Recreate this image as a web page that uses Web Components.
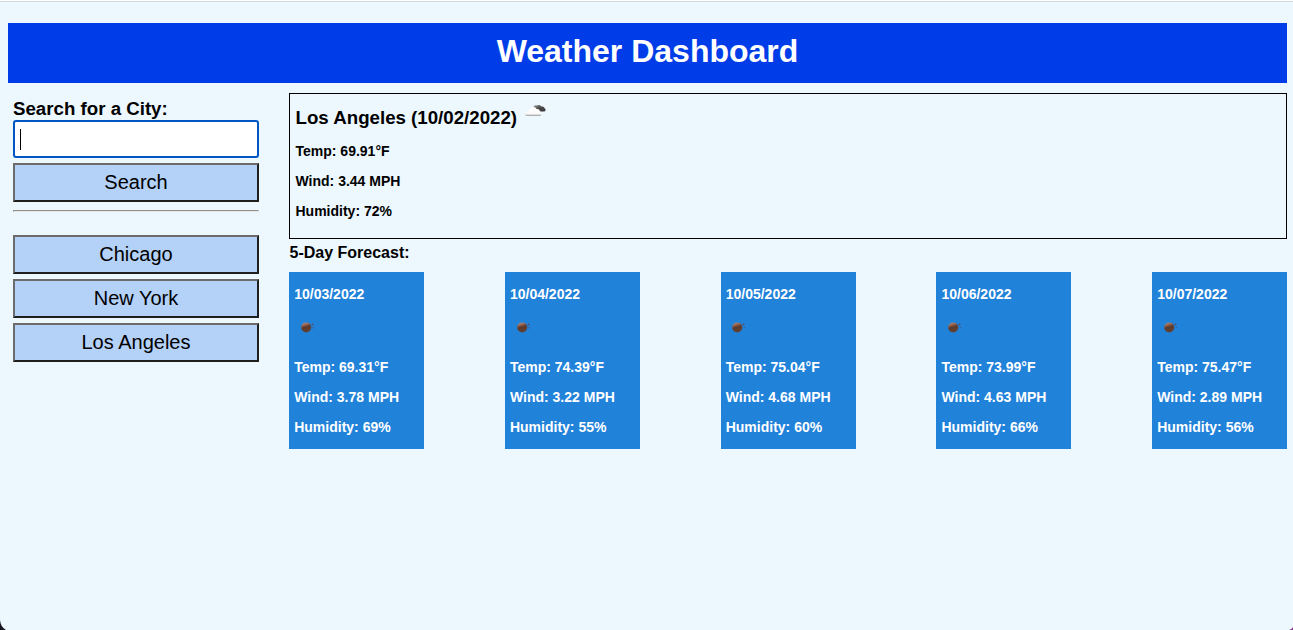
<!DOCTYPE html>
<html lang="en">
<head>
<meta charset="utf-8">
<title>Weather Dashboard</title>
<style>
html,body{margin:0;height:100%;overflow:hidden}
body{background:#ecf7fe;color:#000;font-family:"Liberation Sans",Arial,sans-serif}
</style>
</head>
<body>
<weather-app></weather-app>
<script>
const define = (name, html, setup) => {
  const template = document.createElement('template');
  template.innerHTML = html;
  customElements.define(name, class extends HTMLElement {
    constructor() {
      super();
      this.attachShadow({mode: 'open'}).append(template.content.cloneNode(true));
    }
    connectedCallback() { if (setup) setup(this, this.shadowRoot); }
  });
};

define('page-header', `
<style>
:host{display:block;height:60px;background:#003ce7;color:#fff;text-align:center}
h1{margin:0;font-size:32px;line-height:56px;font-weight:bold}
</style><h1><slot></slot></h1>`);

define('city-button', `
<style>
:host{display:block;height:39px}
button{display:block;box-sizing:border-box;width:100%;height:39px;margin:0;padding:0 0 1px;border:2px solid;border-color:#6b6b6b #1e1e1e #1e1e1e #6b6b6b;background:#b4d1f8;color:#000;font:20px "Liberation Sans",Arial,sans-serif}
</style><button type="button"><slot></slot></button>`);

define('search-field', `
<style>
:host{display:block}
h3{margin:0;font-size:18.7px;line-height:22px;height:22px}
.box{box-sizing:border-box;height:38px;display:flex;align-items:center;padding-left:5px;border:2px solid #0055c4;border-radius:3px;background:#fff}
i{width:1px;height:21px;background:#000}
</style><h3><slot></slot></h3><div class="box" role="textbox"><i></i></div>`);

define('weather-icon', `
<style>
:host{display:block}
svg{display:block}
.sun{display:none}
:host([kind="clear"]) .sun{display:block}
:host([kind="clear"]) .cloud{display:none}
</style>
<svg class="cloud" width="24" height="16" viewBox="0 0 24 16">
<defs>
<linearGradient id="c" x1="0" y1="0" x2="0" y2="1"><stop offset="0" stop-color="#fff"/><stop offset=".76" stop-color="#fafafa"/><stop offset="1" stop-color="#999"/></linearGradient>
<linearGradient id="d" x1="0" y1="0" x2="1" y2="1"><stop offset="0" stop-color="#aaa"/><stop offset=".45" stop-color="#4c4a4a"/><stop offset="1" stop-color="#393737"/></linearGradient>
</defs>
<path fill="url(#d)" d="M9.5 5.2C9 3 11 1.6 12.8 2.4 14.7 1.5 16.7 2 17.4 3.5 19 3.4 20.3 4 20.5 5.2c1.5.4 1.5 2.8-.2 3.3h-5L9.5 5.2z"/>
<path fill="url(#c)" d="M2.9 13c-2.4 0-2.5-3.2.2-3.4C3.2 7.5 4.4 6.8 5.6 7 6 3.8 10.8 2.9 12.6 6.1c2.2-.2 3.3.9 3.3 2.5 2.4.3 2.3 4.3 0 4.4z"/>
</svg>
<svg class="sun" width="16" height="14" viewBox="0 0 16 14">
<defs><linearGradient id="s" x1=".2" y1="0" x2=".5" y2="1"><stop offset="0" stop-color="#b09488"/><stop offset=".3" stop-color="#8f5f4c"/><stop offset=".5" stop-color="#5d392b"/><stop offset="1" stop-color="#654334"/></linearGradient></defs>
<circle cx="6.2" cy="7.4" r="5" fill="url(#s)"/>
<circle cx="12.5" cy="4.4" r=".9" fill="#564e62"/><circle cx="13.4" cy="7.7" r=".7" fill="#4d5270"/>
</svg>`);

define('weather-readings', `
<style>
:host{display:block;font-size:14px;font-weight:bold}
p{margin:0;line-height:30px;height:30px;white-space:nowrap}
</style><p>Temp: <span id="t"></span>°F</p><p>Wind: <span id="w"></span> MPH</p><p>Humidity: <span id="h"></span>%</p>`,
(el, root) => {
  root.getElementById('t').textContent = el.getAttribute('temp');
  root.getElementById('w').textContent = el.getAttribute('wind');
  root.getElementById('h').textContent = el.getAttribute('humidity');
});

define('current-weather', `
<style>
:host{display:block;box-sizing:border-box;height:146px;border:1px solid #000;padding:8px 0 0 5.5px}
.top{display:flex;height:34px}
h3{margin:0;font-size:18.72px;line-height:31px}
weather-icon{margin:1px 0 0 7px}
</style><div class="top"><h3><slot></slot></h3><weather-icon></weather-icon></div>
<weather-readings temp="69.91" wind="3.44" humidity="72"></weather-readings>`);

define('forecast-card', `
<style>
:host{display:block;box-sizing:border-box;width:135px;height:177px;padding:7px 5px 0 5.2px;background:#2182da;color:#fff}
h4{margin:0;font-size:14px;line-height:30px}
weather-icon{padding:11px 0 18px 5.8px}
</style><h4><slot></slot></h4><weather-icon kind="clear"></weather-icon><weather-readings></weather-readings>`,
(el, root) => {
  const [temp, wind, humidity] = el.dataset.values.split(' ');
  const readings = document.createElement('weather-readings');
  readings.setAttribute('temp', temp);
  readings.setAttribute('wind', wind);
  readings.setAttribute('humidity', humidity);
  root.querySelector('weather-readings').replaceWith(readings);
});

define('weather-app', `
<style>
:host{display:block;box-sizing:border-box;position:relative;height:630px;padding:23px 6px 0 8px}
.edge{position:absolute;top:0;left:0;right:0;height:1px;background:#fff;border-bottom:1px solid #d3d8dc}
.corner{position:absolute;bottom:0}
.l{left:0}.r{right:0}
main{display:grid;grid-template-columns:246px 998px;column-gap:30px;padding:10px 0 0 5px}
aside{padding-top:5px}
aside city-button{margin-top:5px}
hr{margin:8px 0 23px;border:1px solid;border-color:#928f8f #e4e6e8 #e4e6e8 #928f8f;height:0}
h4{margin:0;font-size:16px;line-height:27px;height:33px;padding-left:.5px}
.cards{display:flex;justify-content:space-between}
</style>
<div class="edge"></div>
<page-header>Weather Dashboard</page-header>
<main>
<aside>
<search-field>Search for a City:</search-field>
<city-button>Search</city-button>
<hr>
<city-button style="margin-top:0">Chicago</city-button>
<city-button>New York</city-button>
<city-button>Los Angeles</city-button>
</aside>
<section>
<current-weather>Los Angeles (10/02/2022)</current-weather>
<h4>5-Day Forecast:</h4>
<div class="cards">
<forecast-card data-values="69.31 3.78 69">10/03/2022</forecast-card>
<forecast-card data-values="74.39 3.22 55">10/04/2022</forecast-card>
<forecast-card data-values="75.04 4.68 60">10/05/2022</forecast-card>
<forecast-card data-values="73.99 4.63 66">10/06/2022</forecast-card>
<forecast-card data-values="75.47 2.89 56">10/07/2022</forecast-card>
</div>
</section>
</main>
<svg class="corner l" width="6" height="10" viewBox="0 0 6 10"><path d="M0 0Q.5 7 6 10H0z" fill="#171620"/></svg>
<svg class="corner r" width="4" height="3" viewBox="0 0 4 3"><path d="M4 0V3H0Q3 2.5 4 0z" fill="#81307f"/></svg>`);
</script>
</body>
</html>
